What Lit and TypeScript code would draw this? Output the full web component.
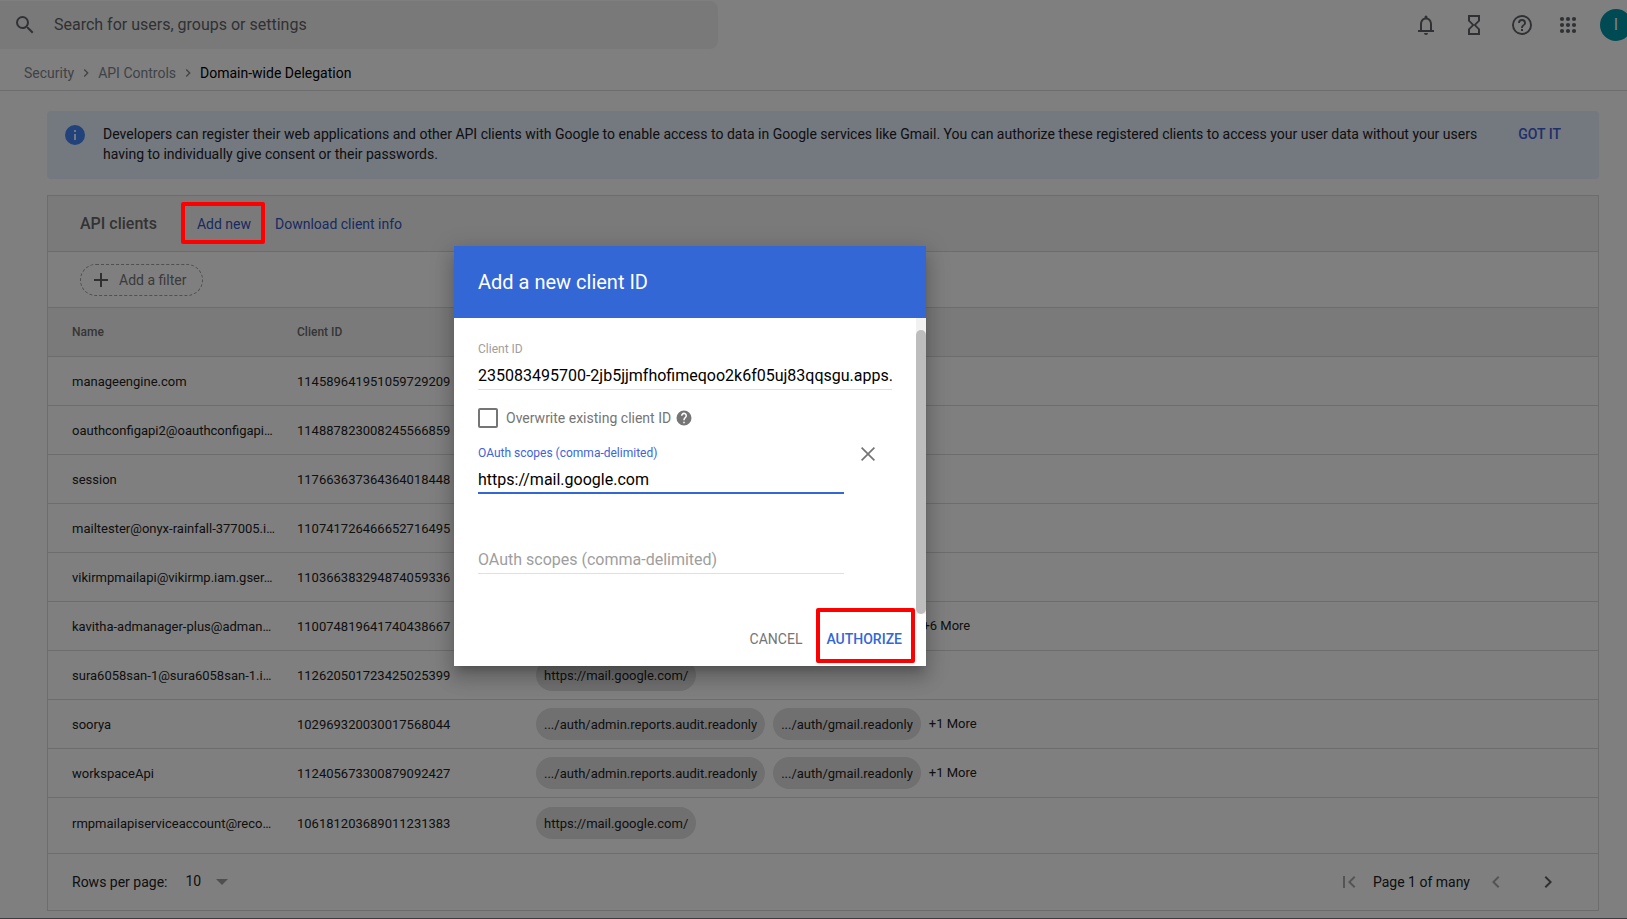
import { LitElement, html, css, svg } from "lit";
import { customElement, state } from "lit/decorators.js";

interface Client {
  name: string;
  id: string;
  scopes: string[];
  more?: number;
}

const AUDIT = ".../auth/admin.reports.audit.readonly";
const GMAIL = ".../auth/gmail.readonly";
const MAIL = "https://mail.google.com/";

const CLIENTS: Client[] = [
  { name: "manageengine.com", id: "114589641951059729209", scopes: [] },
  { name: "oauthconfigapi2@oauthconfigapi…", id: "114887823008245566859", scopes: [] },
  { name: "session", id: "117663637364364018448", scopes: [] },
  { name: "mailtester@onyx-rainfall-377005.i…", id: "110741726466652716495", scopes: [] },
  { name: "vikirmpmailapi@vikirmp.iam.gser…", id: "110366383294874059336", scopes: [] },
  { name: "kavitha-admanager-plus@adman…", id: "110074819641740438667", scopes: [AUDIT, ".../auth/gmail.addons"], more: 6 },
  { name: "sura6058san-1@sura6058san-1.i…", id: "112620501723425025399", scopes: [MAIL] },
  { name: "soorya", id: "102969320030017568044", scopes: [AUDIT, GMAIL], more: 1 },
  { name: "workspaceApi", id: "112405673300879092427", scopes: [AUDIT, GMAIL], more: 1 },
  { name: "rmpmailapiserviceaccount@reco…", id: "106181203689011231383", scopes: [MAIL] },
];

const PATHS = {
  search: svg`<path d="M15.5 14h-.79l-.28-.27A6.47 6.47 0 0 0 16 9.5 6.5 6.5 0 1 0 9.5 16c1.61 0 3.09-.59 4.23-1.57l.27.28v.79l5 4.99L20.49 19l-4.99-5zm-6 0C7.01 14 5 11.99 5 9.5S7.01 5 9.5 5 14 7.01 14 9.5 11.99 14 9.5 14z"/>`,
  bell: svg`<path d="M18 17v-6c0-3.07-1.63-5.64-4.5-6.32V4a1.5 1.5 0 0 0-3 0v.68C7.64 5.36 6 7.92 6 11v6H4v2h16v-2h-2zm-2 0H8v-6c0-2.48 1.51-4.5 4-4.5s4 2.02 4 4.5v6zM12 22a2 2 0 0 0 2-2h-4a2 2 0 0 0 2 2z"/>`,
  hourglass: svg`<path d="M6 2v6l4 4-4 4v6h12v-6l-4-4 4-4V2H6zm10 14.5V20H8v-3.5l4-4 4 4zm-4-5l-4-4V4h8v3.5l-4 4z"/>`,
  help: svg`<path d="M11 18h2v-2h-2v2zm1-16a10 10 0 1 0 0 20 10 10 0 0 0 0-20zm0 18c-4.41 0-8-3.59-8-8s3.59-8 8-8 8 3.59 8 8-3.59 8-8 8zm0-14a4 4 0 0 0-4 4h2c0-1.1.9-2 2-2s2 .9 2 2c0 2-3 1.75-3 5h2c0-2.25 3-2.5 3-5a4 4 0 0 0-4-4z"/>`,
  helpFilled: svg`<path d="M12 2a10 10 0 1 0 0 20 10 10 0 0 0 0-20zm1 17h-2v-2h2v2zm2.07-7.75l-.9.92C13.45 12.9 13 13.5 13 15h-2v-.5c0-1.1.45-2.1 1.17-2.83l1.24-1.26A2 2 0 1 0 10 9H8a4 4 0 1 1 7.07 2.25z"/>`,
  apps: svg`<g>${[6, 12, 18].map((y) => [6, 12, 18].map((x) => svg`<circle cx=${x} cy=${y} r="2.1"/>`))}</g>`,
  info: svg`<path d="M12 2a10 10 0 1 0 0 20 10 10 0 0 0 0-20zm1 15h-2v-6h2v6zm0-8h-2V7h2v2z"/>`,
  right: svg`<path d="M10 6L8.59 7.41 13.17 12l-4.58 4.59L10 18l6-6z"/>`,
  left: svg`<path d="M15.41 7.41L14 6l-6 6 6 6 1.41-1.41L10.83 12z"/>`,
  first: svg`<path d="M18.41 16.59L13.82 12l4.59-4.59L17 6l-6 6 6 6zM6 6h2v12H6z"/>`,
  plus: svg`<path d="M19 13h-6v6h-2v-6H5v-2h6V5h2v6h6v2z"/>`,
  close: svg`<path d="M19 6.2L17.800 5 12 10.800 6.200 5 5 6.200 10.800 12 5 17.800 6.200 19 12 13.200 17.800 19 19 17.800 13.200 12z"/>`,
  down: svg`<path d="M6 9l6 6 6-6z"/>`,
};

const icon = (name: keyof typeof PATHS, cls = "") =>
  html`<svg class="icon ${cls}" viewBox="0 0 24 24" aria-hidden="true">${PATHS[name]}</svg>`;

const base = css`
  * { box-sizing: border-box; }
  button {
    font: inherit;
    color: inherit;
    background: none;
    border: 0;
    padding: 0;
    cursor: pointer;
  }
  a { text-decoration: none; color: inherit; }
  .icon { width: 24px; height: 24px; fill: currentColor; display: block; flex: none; }
  .marked { position: relative; }
  .mark {
    position: absolute;
    border: 4px solid #ff0000;
    border-radius: 2px;
    pointer-events: none;
    z-index: 3;
  }
`;

@customElement("top-bar")
class TopBar extends LitElement {
  static styles = [base, css`
    :host { display: block; border-bottom: 1px solid #dadce0; }
    .bar { display: flex; justify-content: space-between; padding-top: 1px; }
    .search {
      display: flex;
      align-items: center;
      width: 718px;
      height: 48px;
      gap: 17px;
      padding-left: 13px;
      background: #f3f3f3;
      border-radius: 0 8px 8px 0;
      color: #5f6368;
    }
    .search input {
      flex: 1;
      border: 0;
      outline: 0;
      padding: 0;
      background: none;
      font: 16px/24px Roboto, sans-serif;
      color: #5f6368;
    }
    .search input::placeholder { color: #5f6368; opacity: 1; }
    .actions { display: flex; align-items: center; gap: 24px; color: #5f6368; margin-right: -5px; }
    .actions .apps { margin: 0 -4px 0 -2px; }
    .avatar {
      width: 32px;
      height: 32px;
      border-radius: 50%;
      background: #0097a7;
      color: #fff;
      font-size: 16px;
      line-height: 32px;
      text-align: center;
    }
    nav {
      display: flex;
      align-items: center;
      height: 41px;
      padding: 7px 24px 0;
      gap: 4px;
      font-size: 14px;
      line-height: 20px;
      color: #80868b;
    }
    nav .icon { width: 16px; height: 16px; }
    .current { color: #000; }
    .sep { color: #80868b; }
  `];
  render() {
    return html`
      <div class="bar">
        <label class="search">
          ${icon("search")}
          <input type="search" aria-label="Search" placeholder="Search for users, groups or settings" />
        </label>
        <div class="actions">
          <button aria-label="Notifications">${icon("bell")}</button>
          <button aria-label="Tasks">${icon("hourglass")}</button>
          <button aria-label="Help">${icon("help")}</button>
          <button class="apps" aria-label="Apps">${icon("apps")}</button>
          <button class="avatar" aria-label="Account">I</button>
        </div>
      </div>
      <nav aria-label="Breadcrumb">
        <a href="#">Security</a>${icon("right", "sep")}
        <a href="#">API Controls</a>${icon("right", "sep")}
        <span class="current">Domain-wide Delegation</span>
      </nav>
    `;
  }
}

@customElement("info-banner")
class InfoBanner extends LitElement {
  static styles = [base, css`
    :host {
      display: flex;
      align-items: flex-start;
      padding: 12px 38px 15px 16px;
      background: #e8f0fe;
      border-radius: 4px;
      font-size: 14px;
      line-height: 20px;
      color: #202124;
    }
    .icon { color: #4285f4; }
    p { flex: 1; margin: 1px 24px 0 16px; max-width: 1376px; }
    button { margin: 1px 0 0 auto; font-weight: 500; color: #3c5fd9; }
  `];
  render() {
    return html`
      ${icon("info")}
      <p>Developers can register their web applications and other API clients with Google to enable access to data in Google services like Gmail. You can authorize these registered clients to access your user data without your users having to individually give consent or their passwords.</p>
      <button>GOT IT</button>
    `;
  }
}

@customElement("client-table")
class ClientTable extends LitElement {
  static styles = [base, css`
    :host { display: block; border: 1px solid #dadada; font-size: 14px; line-height: 20px; }
    .head {
      display: flex;
      align-items: center;
      height: 56px;
      padding-left: 32px;
      background: #f5f5f5;
      border-bottom: 1px solid #dadada;
    }
    h1 { margin: 0 40px 0 0; font-size: 16px; font-weight: 500; line-height: 24px; color: #666; }
    .link { color: #3353c4; margin-right: 24px; }
    .add-mark { inset: -12px -14px -10px -16px; }
    .filters {
      display: flex;
      align-items: center;
      height: 56px;
      padding-left: 32px;
      border-bottom: 1px solid #dadada;
    }
    .filter {
      display: flex;
      align-items: center;
      height: 32px;
      gap: 6px;
      padding: 0 16px 0 8px;
      border: 1px dashed #9e9e9e;
      border-radius: 16px;
      color: #757575;
    }
    .filter .icon { color: #616161; }
    table { width: 100%; border-collapse: separate; border-spacing: 0; table-layout: fixed; }
    .c-name { width: 225px; }
    .c-id { width: 239px; }
    th {
      height: 49px;
      padding: 0 0 0 24px;
      background: #f5f5f5;
      border-bottom: 1px solid #dadada;
      font-size: 12px;
      font-weight: 500;
      text-align: left;
      color: #6b6b6b;
    }
    td {
      height: 49px;
      padding: 2px 0 0 24px;
      border-bottom: 1px solid #dadada;
      font-size: 13px;
      color: #212121;
      white-space: nowrap;
    }
    td:last-child { padding-top: 0; }
    tbody tr:last-child td { border-bottom: 0; }
    .scopes { display: flex; align-items: center; gap: 8px; line-height: 34px; }
    .chip { height: 32px; padding: 0 8px; border-radius: 16px; background: #e0e0e0; }
    .foot {
      display: flex;
      align-items: center;
      justify-content: space-between;
      height: 57px;
      margin-top: 6px;
      padding: 0 38px 0 24px;
      border-top: 1px solid #dadada;
      color: #212121;
    }
    .rows { display: flex; align-items: center; }
    .rows label { margin-right: 18px; }
    .picker { display: grid; align-items: center; }
    .picker > * { grid-area: 1 / 1; }
    .picker .icon { justify-self: end; color: #9e9e9e; pointer-events: none; }
    select {
      appearance: none;
      width: 49px;
      border: 0;
      padding: 0 0 2px;
      background: none;
      font: inherit;
      color: inherit;
    }
    .pager { display: flex; align-items: center; }
    .pager .off { color: #a8a8a8; }
    .pager .on { color: #616161; margin-left: 28px; }
    .pager span { margin: 0 14px 0 12px; }
  `];
  render() {
    return html`
      <div class="head">
        <h1>API clients</h1>
        <button class="link marked">Add new<span class="mark add-mark"></span></button>
        <a class="link" href="#">Download client info</a>
      </div>
      <div class="filters"><button class="filter">${icon("plus")}Add a filter</button></div>
      <table>
        <colgroup><col class="c-name" /><col class="c-id" /><col /></colgroup>
        <thead><tr><th>Name</th><th>Client ID</th><th></th></tr></thead>
        <tbody>
          ${CLIENTS.map((c) => html`
            <tr>
              <td>${c.name}</td>
              <td>${c.id}</td>
              <td><div class="scopes">
                ${c.scopes.map((s) => html`<span class="chip">${s}</span>`)}
                ${c.more ? html`<span>+${c.more} More</span>` : ""}
              </div></td>
            </tr>`)}
        </tbody>
      </table>
      <div class="foot">
        <div class="rows">
          <label for="rows">Rows per page:</label>
          <div class="picker">
            <select id="rows"><option>10</option><option>20</option><option>50</option></select>
            ${icon("down")}
          </div>
        </div>
        <div class="pager">
          <button class="off" aria-label="First page">${icon("first")}</button>
          <span>Page 1 of many</span>
          <button class="off" aria-label="Previous page">${icon("left")}</button>
          <button class="on" aria-label="Next page">${icon("right")}</button>
        </div>
      </div>
    `;
  }
}

@customElement("client-dialog")
class ClientDialog extends LitElement {
  @state() private clientId = "235083495700-2jb5jjmfhofimeqoo2k6f05uj83qqsgu.apps.";
  static styles = [base, css`
    :host {
      display: block;
      width: 472px;
      background: #fff;
      box-shadow: 0 12px 17px 2px rgba(0, 0, 0, 0.14), 0 5px 22px 4px rgba(0, 0, 0, 0.12), 0 7px 8px -4px rgba(0, 0, 0, 0.2);
    }
    h2 {
      margin: 0;
      padding: 24px;
      background: #3367d6;
      color: #fff;
      font-size: 20px;
      font-weight: 400;
      line-height: 24px;
    }
    .body { display: flex; }
    form { flex: 1; padding: 23px 24px 40px; }
    .track { width: 10px; padding-top: 12px; background: #f1f1f1; display: flex; }
    .thumb { flex: 1; background: #bdbdbd; border-radius: 5px; }
    .field { display: block; }
    .field label { display: block; font-size: 12px; line-height: 16px; color: #9e9e9e; }
    .field input {
      display: block;
      width: 100%;
      height: 33px;
      border: 0;
      border-bottom: 1px solid #e0e0e0;
      border-radius: 0;
      padding: 5px 0 0;
      outline: 0;
      background: none;
      font: 16px/24px Roboto, sans-serif;
      color: #000;
    }
    .field input::placeholder { color: #9e9e9e; opacity: 1; }
    .check { display: flex; align-items: center; height: 20px; margin: 18px 0 17px; color: #757575; font-size: 14px; }
    .check input {
      appearance: none;
      width: 20px;
      height: 20px;
      margin: 0 8px 0 0;
      border: 2px solid #757575;
      border-radius: 2px;
    }
    .check .icon { width: 18px; height: 18px; margin-left: 4px; }
    .scope { display: flex; align-items: flex-start; width: 100%; }
    .scope .field { flex: 1; }
    .scope .field label { color: #3c64dc; }
    .scope .focused { border-bottom: 2px solid #3367d6; }
    .scope button { margin: -3px 12px 0; color: #757575; }
    .next { margin: 47px 48px 0 0; }
    footer { display: flex; justify-content: flex-end; gap: 24px; padding: 15px 24px 17px; font-size: 14px; line-height: 20px; }
    .cancel { color: #757575; }
    .authorize { color: #3367d6; font-weight: 500; }
    .authorize-mark { inset: -21px -13px -14px -10px; }
  `];
  render() {
    return html`
      <h2>Add a new client ID</h2>
      <div class="body">
        <form>
          <div class="field">
            <label for="client">Client ID</label>
            <input id="client" type="text" .value=${this.clientId} />
          </div>
          <div class="check">
            <input id="overwrite" type="checkbox" />
            <label for="overwrite">Overwrite existing client ID</label>
            ${icon("helpFilled")}
          </div>
          <div class="scope">
            <div class="field">
              <label for="scope">OAuth scopes (comma-delimited)</label>
              <input id="scope" class="focused" type="text" .value=${"https://mail.google.com"} />
            </div>
            <button type="button" aria-label="Remove scope">${icon("close")}</button>
          </div>
          <div class="field next">
            <input type="text" aria-label="OAuth scopes" placeholder="OAuth scopes (comma-delimited)" />
          </div>
        </form>
        <div class="track"><div class="thumb"></div></div>
      </div>
      <footer>
        <button class="cancel">CANCEL</button>
        <button class="authorize marked">AUTHORIZE<span class="mark authorize-mark"></span></button>
      </footer>
    `;
  }
}

@customElement("app-root")
class AppRoot extends LitElement {
  static styles = css`
    :host {
      display: block;
      position: relative;
      min-height: 100vh;
      overflow: hidden;
      background: #fff;
      font-family: Roboto, sans-serif;
    }
    main { padding: 20px 28px 8px 47px; }
    info-banner { margin-bottom: 16px; }
    .scrim {
      position: absolute;
      inset: 0;
      z-index: 1;
      display: flex;
      align-items: center;
      justify-content: center;
      padding: 0 247px 6px 0;
      background: rgba(0, 0, 0, 0.5);
      border-bottom: 1px solid #3c3c40;
    }
  `;
  render() {
    return html`
      <top-bar></top-bar>
      <main>
        <info-banner></info-banner>
        <client-table></client-table>
      </main>
      <div class="scrim"><client-dialog role="dialog" aria-modal="true" aria-label="Add a new client ID"></client-dialog></div>
    `;
  }
}
